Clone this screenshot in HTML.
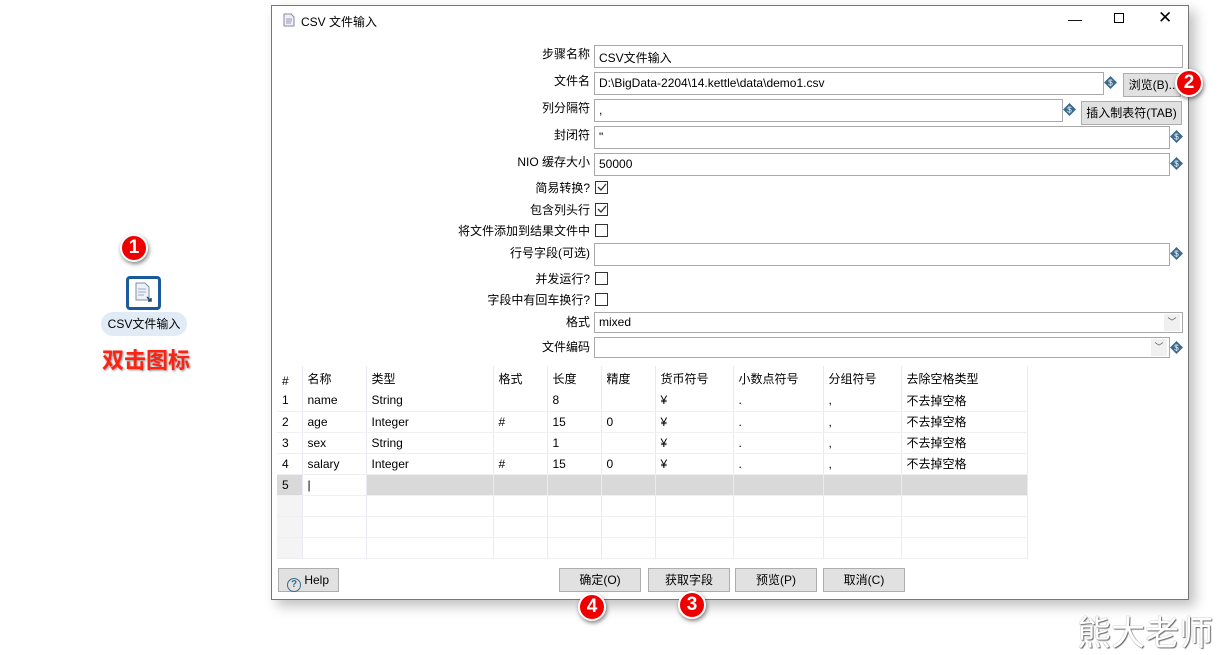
<!DOCTYPE html><html><head><meta charset="utf-8"><style>
*{box-sizing:border-box}body{margin:0;width:1225px;height:654px;background:#fff;font-family:"Liberation Sans","Noto Sans CJK SC",sans-serif;font-size:12px;color:#000;position:relative;overflow:hidden}
.a{position:absolute}
.win{left:271px;top:5px;width:918px;height:595px;border:1px solid #777;background:#fff;box-shadow:6px 6px 12px rgba(0,0,0,.25)}
.lbl{position:absolute;right:635px;text-align:right;white-space:nowrap;font-size:12px}
.in{position:absolute;border:1px solid #a9a9a9;background:#fff;height:23px;padding:3px 4px;font-size:12px}
.btn{position:absolute;border:1px solid #adadad;background:#e1e1e1;text-align:center;font-size:12px;line-height:22px;height:24px}
.dia{position:absolute;width:13px;height:13px}
.cb{position:absolute;left:595px;width:13px;height:13px;border:1px solid #333;background:#fff}
.badge{position:absolute;width:28px;height:28px;border-radius:50%;background:#e00;border:2px solid #fff;box-shadow:1px 2px 4px rgba(0,0,0,.5);color:#fff;font-weight:bold;font-size:19px;text-align:center;line-height:24px}
table{border-collapse:collapse;position:absolute;left:277px;top:366px;font-size:12px}
td{height:21px;padding:0 5px;border-right:1px solid #e8ecf0;border-bottom:1px solid #f0f0f0;white-space:nowrap}
tr.h td{height:24px;border-bottom:none}
</style></head><body>
<div class="a win"></div>
<svg class="a" style="left:283px;top:13px" width="12" height="14"><path d="M1 1h7l3 3v9H1z" fill="#eef" stroke="#889"/><path d="M3 6h6M3 8h6M3 10h5" stroke="#99a"/></svg>
<div class="a" style="left:301px;top:13px;font-size:12px">CSV 文件输入</div>
<div class="a" style="left:1068px;top:11px;font-size:14px">—</div>
<div class="a" style="left:1114px;top:13px;width:10px;height:10px;border:1px solid #000"></div>
<div class="a" style="left:1158px;top:8px;font-size:17px">✕</div>

<div class="lbl" style="top:45px">步骤名称</div><div class="in" style="left:594px;top:45px;width:589px">CSV文件输入</div>
<div class="lbl" style="top:72px">文件名</div><div class="in" style="left:594px;top:72px;width:510px">D:\BigData-2204\14.kettle\data\demo1.csv</div>
<div class="btn" style="left:1123px;top:73px;width:58px">浏览(B)..</div>
<div class="lbl" style="top:99px">列分隔符</div><div class="in" style="left:594px;top:99px;width:469px">,</div>
<div class="btn" style="left:1081px;top:101px;width:101px">插入制表符(TAB)</div>
<div class="lbl" style="top:126px">封闭符</div><div class="in" style="left:594px;top:126px;width:576px">"</div>
<div class="lbl" style="top:153px">NIO 缓存大小</div><div class="in" style="left:594px;top:153px;width:576px">50000</div>
<div class="lbl" style="top:179px">简易转换?</div><div class="cb" style="top:181px"><svg width="11" height="11" style="position:absolute"><path d="M2 5l3 3 5-6" fill="none" stroke="#333" stroke-width="1.3"/></svg></div>
<div class="lbl" style="top:201px">包含列头行</div><div class="cb" style="top:203px"><svg width="11" height="11" style="position:absolute"><path d="M2 5l3 3 5-6" fill="none" stroke="#333" stroke-width="1.3"/></svg></div>
<div class="lbl" style="top:222px">将文件添加到结果文件中</div><div class="cb" style="top:224px"></div>
<div class="lbl" style="top:244px">行号字段(可选)</div><div class="in" style="left:594px;top:243px;width:576px"></div>
<div class="lbl" style="top:270px">并发运行?</div><div class="cb" style="top:272px"></div>
<div class="lbl" style="top:291px">字段中有回车换行?</div><div class="cb" style="top:293px"></div>
<div class="lbl" style="top:313px">格式</div><div class="in" style="left:594px;top:312px;width:589px;height:21px;padding-top:2px">mixed<span style="position:absolute;right:2px;top:1px;width:16px;height:17px;background:#f0f0f0;font-size:9px;text-align:center;line-height:17px;color:#555">﹀</span></div>
<div class="lbl" style="top:338px">文件编码</div><div class="in" style="left:594px;top:337px;width:576px;height:21px"><span style="position:absolute;right:2px;top:1px;width:16px;height:17px;background:#f0f0f0;font-size:9px;text-align:center;line-height:17px;color:#555">﹀</span></div>

<svg class="dia" style="left:1104px;top:76px" viewBox="0 0 13 13"><path d="M6.5 0L13 6.5 6.5 13 0 6.5z" fill="#3d6b8c"/><text x="6.5" y="9.5" font-size="8" fill="#fff" text-anchor="middle" font-family="Liberation Sans">$</text></svg>
<svg class="dia" style="left:1063px;top:103px" viewBox="0 0 13 13"><path d="M6.5 0L13 6.5 6.5 13 0 6.5z" fill="#3d6b8c"/><text x="6.5" y="9.5" font-size="8" fill="#fff" text-anchor="middle" font-family="Liberation Sans">$</text></svg>
<svg class="dia" style="left:1170px;top:130px" viewBox="0 0 13 13"><path d="M6.5 0L13 6.5 6.5 13 0 6.5z" fill="#3d6b8c"/><text x="6.5" y="9.5" font-size="8" fill="#fff" text-anchor="middle" font-family="Liberation Sans">$</text></svg>
<svg class="dia" style="left:1170px;top:157px" viewBox="0 0 13 13"><path d="M6.5 0L13 6.5 6.5 13 0 6.5z" fill="#3d6b8c"/><text x="6.5" y="9.5" font-size="8" fill="#fff" text-anchor="middle" font-family="Liberation Sans">$</text></svg>
<svg class="dia" style="left:1170px;top:247px" viewBox="0 0 13 13"><path d="M6.5 0L13 6.5 6.5 13 0 6.5z" fill="#3d6b8c"/><text x="6.5" y="9.5" font-size="8" fill="#fff" text-anchor="middle" font-family="Liberation Sans">$</text></svg>
<svg class="dia" style="left:1170px;top:341px" viewBox="0 0 13 13"><path d="M6.5 0L13 6.5 6.5 13 0 6.5z" fill="#3d6b8c"/><text x="6.5" y="9.5" font-size="8" fill="#fff" text-anchor="middle" font-family="Liberation Sans">$</text></svg>

<table>
<tr class="h"><td style="width:25px;padding-top:6px">#</td><td style="width:64px">名称</td><td style="width:127px">类型</td><td style="width:54px">格式</td><td style="width:54px">长度</td><td style="width:54px">精度</td><td style="width:78px">货币符号</td><td style="width:90px">小数点符号</td><td style="width:78px">分组符号</td><td style="width:126px">去除空格类型</td><td style="width:158px;border:none"></td></tr>
<tr><td>1</td><td>name</td><td>String</td><td></td><td>8</td><td></td><td>¥</td><td>.</td><td>,</td><td>不去掉空格</td><td style="border:none"></td></tr>
<tr><td>2</td><td>age</td><td>Integer</td><td>#</td><td>15</td><td>0</td><td>¥</td><td>.</td><td>,</td><td>不去掉空格</td><td style="border:none"></td></tr>
<tr><td>3</td><td>sex</td><td>String</td><td></td><td>1</td><td></td><td>¥</td><td>.</td><td>,</td><td>不去掉空格</td><td style="border:none"></td></tr>
<tr><td>4</td><td>salary</td><td>Integer</td><td>#</td><td>15</td><td>0</td><td>¥</td><td>.</td><td>,</td><td>不去掉空格</td><td style="border:none"></td></tr>
<tr style="background:#d9d9d9"><td>5</td><td style="background:#fff">|</td><td></td><td></td><td></td><td></td><td></td><td></td><td></td><td></td><td style="background:#fff;border:none"></td></tr>
<tr><td style="background:#f4f4f4"></td><td></td><td></td><td></td><td></td><td></td><td></td><td></td><td></td><td></td><td style="border:none"></td></tr>
<tr><td style="background:#f4f4f4"></td><td></td><td></td><td></td><td></td><td></td><td></td><td></td><td></td><td></td><td style="border:none"></td></tr>
<tr><td style="background:#f4f4f4"></td><td></td><td></td><td></td><td></td><td></td><td></td><td></td><td></td><td></td><td style="border:none"></td></tr>
</table>

<div class="btn" style="left:278px;top:568px;width:61px;text-align:left;padding-left:8px"><span style="display:inline-block;width:14px;height:14px;border:1.5px solid #3d6b8c;border-radius:50%;font-size:10px;line-height:11px;text-align:center;color:#3d6b8c;font-weight:bold;vertical-align:-3px">?</span> Help</div>
<div class="btn" style="left:559px;top:568px;width:82px">确定(O)</div>
<div class="btn" style="left:648px;top:568px;width:82px">获取字段</div>
<div class="btn" style="left:735px;top:568px;width:82px">预览(P)</div>
<div class="btn" style="left:823px;top:568px;width:82px">取消(C)</div>

<div class="a" style="left:126px;top:276px;width:35px;height:34px;border:3px solid #1a5a9a;border-radius:4px;background:#fff"></div>
<svg class="a" style="left:134px;top:282px" width="20" height="22"><path d="M2 1h9l4 4v13H2z" fill="#eef2f8" stroke="#7a8da8"/><path d="M4 7h8M4 10h8M4 13h6" stroke="#99aac0"/><path d="M13 15l4 4M17 16v3h-3" stroke="#1a4a7a" stroke-width="1.5" fill="none"/></svg>
<div class="a" style="left:101px;top:312px;width:86px;height:24px;border-radius:12px;background:#e1ebf5;text-align:center;line-height:24px;font-size:12px">CSV文件输入</div>
<div class="a" style="left:102px;top:343px;font-size:22px;font-weight:bold;color:#f21;text-shadow:1px 1px 2px #888">双击图标</div>

<div class="badge" style="left:120px;top:234px">1</div>
<div class="badge" style="left:1175px;top:69px">2</div>
<div class="badge" style="left:678px;top:591px">3</div>
<div class="badge" style="left:578px;top:593px">4</div>

<div class="a" style="left:1077px;top:606px;font-size:34px;color:#fff;text-shadow:0 0 1px #777,1px 1px 1px #666;letter-spacing:0px">熊大老师</div>
</body></html>
